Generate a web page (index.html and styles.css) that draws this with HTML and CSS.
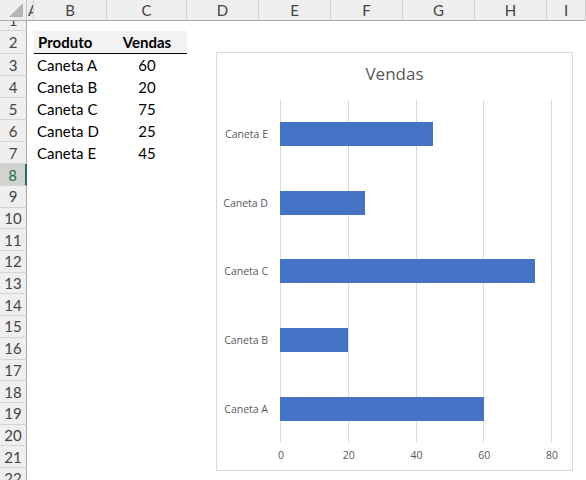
FILE: index.html
```html
<!DOCTYPE html>
<html lang="pt">
<head>
<meta charset="utf-8">
<title>Vendas</title>
<link rel="stylesheet" href="styles.css">
</head>
<body>
<div class="sheet">
  <div class="grid">
    <!-- column headings -->
    <div class="corner"><span class="corner-tri"></span></div>
    <div class="colhead col-a">A</div>
    <div class="colhead">B</div>
    <div class="colhead">C</div>
    <div class="colhead">D</div>
    <div class="colhead">E</div>
    <div class="colhead">F</div>
    <div class="colhead">G</div>
    <div class="colhead">H</div>
    <div class="colhead">I</div>

    <!-- row 1 (scrolled, partly hidden) -->
    <div class="rowhead r1"><span>1</span></div>
    <div class="cell span9"></div>

    <!-- row 2: table heading -->
    <div class="rowhead">2</div>
    <div class="cell"></div>
    <div class="cell th">Produto</div>
    <div class="cell th num">Vendas</div>
    <div class="cell span6"></div>

    <div class="rowhead">3</div>
    <div class="cell"></div>
    <div class="cell">Caneta A</div>
    <div class="cell num">60</div>
    <div class="cell span6"></div>

    <div class="rowhead">4</div>
    <div class="cell"></div>
    <div class="cell">Caneta B</div>
    <div class="cell num">20</div>
    <div class="cell span6"></div>

    <div class="rowhead">5</div>
    <div class="cell"></div>
    <div class="cell">Caneta C</div>
    <div class="cell num">75</div>
    <div class="cell span6"></div>

    <div class="rowhead">6</div>
    <div class="cell"></div>
    <div class="cell">Caneta D</div>
    <div class="cell num">25</div>
    <div class="cell span6"></div>

    <div class="rowhead">7</div>
    <div class="cell"></div>
    <div class="cell">Caneta E</div>
    <div class="cell num">45</div>
    <div class="cell span6"></div>

    <div class="rowhead active">8</div>
    <div class="cell span9"></div>
    <div class="rowhead">9</div>
    <div class="cell span9"></div>
    <div class="rowhead">10</div>
    <div class="cell span9"></div>
    <div class="rowhead">11</div>
    <div class="cell span9"></div>
    <div class="rowhead">12</div>
    <div class="cell span9"></div>
    <div class="rowhead">13</div>
    <div class="cell span9"></div>
    <div class="rowhead">14</div>
    <div class="cell span9"></div>
    <div class="rowhead">15</div>
    <div class="cell span9"></div>
    <div class="rowhead">16</div>
    <div class="cell span9"></div>
    <div class="rowhead">17</div>
    <div class="cell span9"></div>
    <div class="rowhead">18</div>
    <div class="cell span9"></div>
    <div class="rowhead">19</div>
    <div class="cell span9"></div>
    <div class="rowhead">20</div>
    <div class="cell span9"></div>
    <div class="rowhead">21</div>
    <div class="cell span9"></div>
    <div class="rowhead">22</div>
    <div class="cell span9"></div>
  </div>

  <!-- floating chart object -->
  <div class="chart">
    <div class="chart-title">Vendas</div>
    <div class="cat-labels">
      <span>Caneta E</span>
      <span>Caneta D</span>
      <span>Caneta C</span>
      <span>Caneta B</span>
      <span>Caneta A</span>
    </div>
    <div class="plot">
      <div class="gridlines"><i></i><i></i><i></i><i></i></div>
      <div class="bars">
        <div class="band"><div class="bar" style="width:56.25%"></div></div>
        <div class="band"><div class="bar" style="width:31.25%"></div></div>
        <div class="band"><div class="bar" style="width:93.75%"></div></div>
        <div class="band"><div class="bar" style="width:25%"></div></div>
        <div class="band"><div class="bar" style="width:75%"></div></div>
      </div>
    </div>
    <div class="axis">
      <span>0</span><span>20</span><span>40</span><span>60</span><span>80</span>
    </div>
  </div>
</div>
</body>
</html>
```
FILE: styles.css
```css
html, body {
  margin: 0;
  padding: 0;
  background: #ffffff;
}

.sheet {
  position: relative;
  width: 586px;
  height: 480px;
  overflow: hidden;
  font-family: "Lato", "Liberation Sans", sans-serif;
  font-size: 15px;
  color: #000;
}

/* worksheet: heading column + columns A..I */
.grid {
  display: grid;
  grid-template-columns: 27px 7px 73px 80px 72px 72px 72px 72px 72px 1fr;
  grid-template-rows:
    21px 10px 23px
    22px 22px 22px 22px 22px 22px
    21.7px 21.7px 21.7px 21.7px 21.7px 21.7px 21.7px
    21.7px 21.7px 21.7px 21.7px 21.7px 21.7px 21.7px;
}

.corner {
  background: #efefef;
  border-right: 1px solid #c8c8c8;
  border-bottom: 1px solid #ababab;
  display: flex;
  justify-content: flex-end;
  align-items: flex-end;
  padding: 0 3px 3px 0;
}
.corner-tri {
  width: 0;
  height: 0;
  border-left: 14px solid transparent;
  border-bottom: 14px solid #b4b4b4;
}

.colhead {
  background: #efefef;
  border-right: 1px solid #cfcfcf;
  border-bottom: 1px solid #ababab;
  color: #444;
  display: flex;
  align-items: center;
  justify-content: center;
  overflow: hidden;
  white-space: nowrap;
}
.col-a {
  justify-content: flex-start;
  padding-left: 1px;
}

.rowhead {
  background: #efefef;
  border-right: 1px solid #ababab;
  border-bottom: 1px solid #d4d4d4;
  color: #444;
  display: flex;
  align-items: center;
  justify-content: center;
  overflow: hidden;
}
/* row 1 is scrolled mostly out of view: only the foot of its number shows */
.rowhead.r1 {
  align-items: flex-start;
}
.rowhead.r1 span {
  line-height: 10px;
  margin-top: -6px;
}
.rowhead.active {
  background: #d2d2d2;
  color: #217346;
  border-right: 2px solid #217346;
}

.cell {
  display: flex;
  align-items: center;
  padding-left: 3px;
  white-space: nowrap;
}
.cell.num {
  justify-content: center;
  padding-left: 0;
}
.cell.th {
  font-weight: bold;
  background: #f2f2f2;
  border-bottom: 1px solid #000;
  padding-left: 4px;
}
.cell.th.num {
  padding-left: 0;
}
.span6 { grid-column: span 6; }
.span9 { grid-column: span 9; }

/* chart object */
.chart {
  position: absolute;
  left: 216px;
  top: 52px;
  width: 357px;
  height: 419px;
  box-sizing: border-box;
  background: #fff;
  border: 1px solid #d9d9d9;
  display: grid;
  grid-template-columns: 51px 12px 272px 1fr;
  grid-template-rows: 47px 343px 1fr;
  font-family: "Open Sans", "Noto Sans", sans-serif;
  color: #595959;
}
.chart-title {
  grid-column: 1 / -1;
  text-align: center;
  font-size: 17px;
  line-height: 24px;
  padding-top: 9px;
}

.cat-labels {
  grid-column: 1;
  grid-row: 2;
  display: grid;
  grid-template-rows: repeat(5, 1fr);
  font-size: 10.5px;
}
.cat-labels span {
  display: flex;
  align-items: center;
  justify-content: flex-end;
  white-space: nowrap;
}

.plot {
  grid-column: 3;
  grid-row: 2;
  display: grid;
}
.gridlines, .bars {
  grid-area: 1 / 1;
}
.gridlines {
  display: grid;
  grid-template-columns: repeat(4, 1fr);
  border-right: 1px solid #d9d9d9;
}
.gridlines i {
  border-left: 1px solid #d9d9d9;
}
.bars {
  display: grid;
  grid-template-rows: repeat(5, 1fr);
}
.band {
  display: flex;
  align-items: center;
}
.bar {
  height: 24px;
  background: #4472c4;
}

.axis {
  grid-column: 3;
  grid-row: 3;
  display: flex;
  justify-content: space-between;
  padding: 4px 0 0 1px;
  font-size: 10.5px;
  line-height: 16px;
}
.axis span {
  width: 0;
  display: flex;
  justify-content: center;
}
```
